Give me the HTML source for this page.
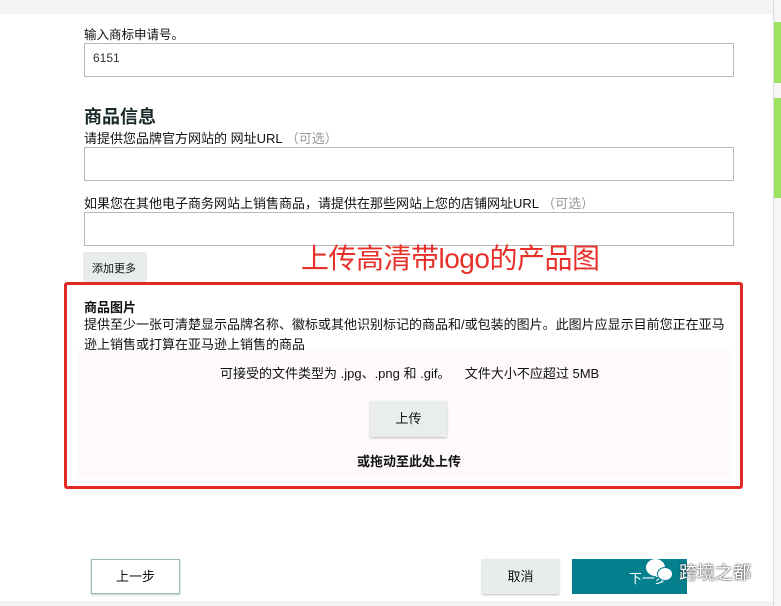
<!DOCTYPE html>
<html><head><meta charset="utf-8"><style>
*{margin:0;padding:0;box-sizing:border-box}
body{width:781px;height:606px;position:relative;overflow:hidden;background:#fff;font-family:"Liberation Sans","Noto Sans CJK SC",sans-serif;color:#111;font-size:13px}
.a{position:absolute}
.inp{position:absolute;left:84px;width:650px;height:34px;border:1px solid #b8b8b8;background:#fff}
</style></head><body>
<div class="a" style="left:0;top:0;width:773px;height:14px;background:#f3f3f3"></div>
<div class="a" style="left:773px;top:0;width:8px;height:606px;background:#f6f6f6;border-left:1px solid #ddd"></div>
<div class="a" style="left:774px;top:22px;width:7px;height:61px;background:#9ee35f"></div>
<div class="a" style="left:774px;top:98px;width:7px;height:100px;background:#9ee35f"></div>
<div class="a" style="left:0;top:601px;width:773px;height:5px;background:#f2f2f2"></div>
<div class="a" style="left:84px;top:24px;font-size:12.5px">输入商标申请号。</div>
<div class="inp" style="top:43px"></div>
<div class="a" style="left:93px;top:51px;font-size:12px;color:#333">6151</div>
<div class="a" style="left:84px;top:103px;font-size:18px;font-weight:bold;color:#1a2a2a">商品信息</div>
<div class="a" style="left:84px;top:128px;font-size:13px">请提供您品牌官方网站的 网址URL <span style="color:#999">（可选）</span></div>
<div class="inp" style="top:147px"></div>
<div class="a" style="left:84px;top:193px;font-size:13px">如果您在其他电子商务网站上销售商品，请提供在那些网站上您的店铺网址URL <span style="color:#999">（可选）</span></div>
<div class="inp" style="top:212px"></div>
<div class="a" style="left:83px;top:252px;width:64px;height:30px;background:#e8ecec;border-radius:2px;font-size:11px;padding:8px 0 0 9px">添加更多</div>
<div class="a" style="left:301px;top:237px;font-size:28px;color:#e8302a;letter-spacing:-0.5px">上传高清带logo的产品图</div>
<div class="a" style="left:64px;top:282px;width:679px;height:207px;border:3px solid #e02a23;border-radius:3px"></div>
<div class="a" style="left:78px;top:350px;width:654px;height:128px;background:#fdf9fd"></div>
<div class="a" style="left:84px;top:297px;font-size:13px;font-weight:bold">商品图片</div>
<div class="a" style="left:84px;top:315px;width:650px;font-size:13px;line-height:20px">提供至少一张可清楚显示品牌名称、徽标或其他识别标记的商品和/或包装的图片。此图片应显示目前您正在亚马<br>逊上销售或打算在亚马逊上销售的商品</div>
<div class="a" style="left:220px;top:363px;font-size:13px;white-space:nowrap">可接受的文件类型为 .jpg、.png 和 .gif。&nbsp;&nbsp;&nbsp;&nbsp;文件大小不应超过 5MB</div>
<div class="a" style="left:370px;top:401px;width:77px;height:36px;background:#e9eded;box-shadow:0 1px 2px #bbb;font-size:13px;text-align:center;line-height:36px">上传</div>
<div class="a" style="left:357px;top:451px;font-size:13px;font-weight:bold">或拖动至此处上传</div>
<div class="a" style="left:91px;top:559px;width:89px;height:35px;border:1px solid #9bb;box-shadow:0 1px 2px #bcc;font-size:13px;text-align:center;line-height:33px">上一步</div>
<div class="a" style="left:482px;top:559px;width:77px;height:35px;background:#e8ecec;box-shadow:0 1px 2px #bbb;font-size:13px;text-align:center;line-height:35px">取消</div>
<div class="a" style="left:572px;top:559px;width:115px;height:35px;background:#047f8e;color:#fff;font-size:13px;padding:9px 0 0 57px">下一步</div>
<div class="a" style="left:646px;top:559px;width:19px;height:17px;background:#fff;border-radius:50%"></div>
<div class="a" style="left:657px;top:567px;width:16px;height:14px;background:#fff;border-radius:50%;border:1px solid #047f8e"></div>
<div class="a" style="left:679px;top:559px;font-size:18px;color:#fff;text-shadow:0 0 2px #333,0 0 1px #333">跨境之都</div>
</body></html>
